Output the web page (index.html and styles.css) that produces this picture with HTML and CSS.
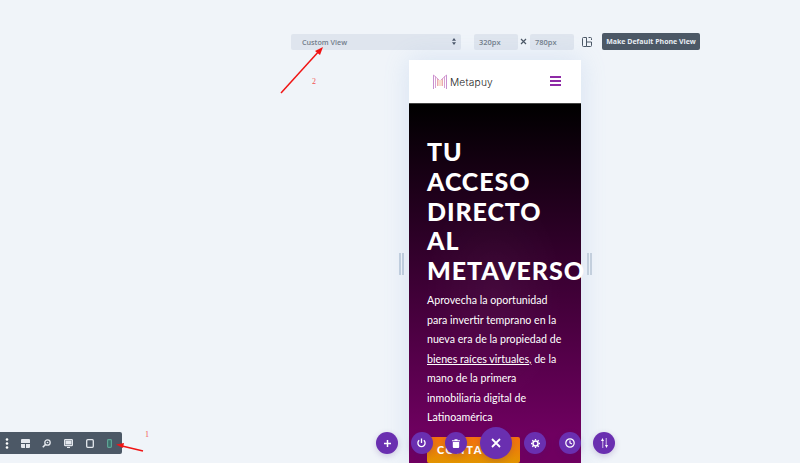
FILE: index.html
```html
<!DOCTYPE html>
<html lang="es">
<head>
<meta charset="utf-8">
<title>Metapuy</title>
<link rel="stylesheet" href="styles.css">
</head>
<body>
<div class="page">
  <div class="topbar">
    <div class="select"><span>Custom View</span>
      <svg class="updown" width="4" height="7" viewBox="0 0 4 7"><path d="M2 0 4 2.700H0zM2 7 0 4.300h4z" fill="#4a5568"/></svg>
    </div>
    <div class="dim">320px</div>
    <svg class="times" width="7" height="7" viewBox="0 0 7 7"><path d="M1 1l5 5M6 1 1 6" stroke="#4c5866" stroke-width="1.200"/></svg>
    <div class="dim">780px</div>
    <svg class="swap" width="10" height="10" viewBox="0 0 10 10" fill="none" stroke="#4c5866" stroke-width="1"><path d="M4.500 .5H1.500a1 1 0 0 0-1 1v7a1 1 0 0 0 1 1h3zM4.500 5h5v3.500a1 1 0 0 1-1 1h-4M6.500 .5h2a1 1 0 0 1 1 1v1.500"/></svg>
    <button class="make">Make Default Phone View</button>
  </div>

  <div class="stage">
    <div class="handle"></div>
    <div class="phone">
      <header class="nav">
        <div class="brand">
          <svg width="14" height="16" viewBox="0 0 14 16" fill="none" stroke-width="1">
            <path d="M.5 1v14" stroke="#c98fd0"/><path d="M2.500 2v12" stroke="#d7a0d2"/>
            <path d="M4.500 4v8" stroke="#eaa9b0"/><path d="M6 6v6" stroke="#f0b9a0"/>
            <path d="M8 6v6" stroke="#f0b9a0"/><path d="M9.500 4v8" stroke="#eaa9b0"/>
            <path d="M11.500 2v12" stroke="#d7a0d2"/><path d="M13.500 1v14" stroke="#c98fd0"/>
            <path d="M.5 1 6 6M13.500 1 8 6" stroke="#d7a0d2"/>
          </svg>
          <span class="logo-text">Metapuy</span>
        </div>
        <div class="burger"><i></i><i></i><i></i></div>
      </header>
      <section class="hero">
        <h1>TU<br>ACCESO<br>DIRECTO<br>AL<br>METAVERSO</h1>
        <p>Aprovecha la oportunidad para invertir temprano en la nueva era de la propiedad de <u>bienes raíces virtuales,</u> de la mano de la primera inmobiliaria digital de Latinoamérica</p>
        <a class="cta">CONTACTO</a>
      </section>
    </div>
    <div class="handle"></div>
  </div>

  <div class="views">
    <svg class="vi" width="4" height="11" viewBox="0 0 4 11" fill="#fff"><circle cx="2" cy="1.500" r="1.300"/><circle cx="2" cy="5.500" r="1.300"/><circle cx="2" cy="9.500" r="1.300"/></svg>
    <svg class="vi" width="9" height="9" viewBox="0 0 9 9" fill="#e4e8ee"><path d="M0 1a1 1 0 0 1 1-1h7a1 1 0 0 1 1 1v3H0z"/><path d="M0 5h4v4H1a1 1 0 0 1-1-1zM5 5h4v3a1 1 0 0 1-1 1H5z"/></svg>
    <svg class="vi" width="9" height="9" viewBox="0 0 9 9" fill="none" stroke="#e4e8ee"><circle cx="5.500" cy="3.500" r="2.700" stroke-width="1.300"/><circle cx="5.500" cy="3.500" r=".8" fill="#e4e8ee" stroke="none"/><path d="M3.500 5.500 .8 8.200" stroke-width="1.600"/></svg>
    <svg class="vi" width="9" height="9" viewBox="0 0 9 9" fill="none" stroke="#e4e8ee"><rect x=".6" y=".6" width="7.800" height="6" rx=".6" stroke-width="1.200"/><path d="M3 8.500h3" stroke-width="1.200"/><rect x="1.500" y="1.500" width="6" height="4" fill="#e4e8ee" stroke="none"/></svg>
    <svg class="vi" width="8" height="9" viewBox="0 0 8 9" fill="none" stroke="#e4e8ee" stroke-width="1.300"><rect x=".7" y=".7" width="6.600" height="7.600" rx="1"/></svg>
    <svg class="vi" width="5" height="9" viewBox="0 0 5 9" fill="#3d6f6c" stroke="#5fa596" stroke-width="1.200"><rect x=".6" y=".6" width="3.800" height="7.800" rx=".8"/></svg>
  </div>

  <div class="fabs">
    <button class="fab edge"><svg width="7" height="7" viewBox="0 0 7 7"><path d="M3.500 0v7M0 3.500h7" stroke="#fff" stroke-width="1.500"/></svg></button>
    <button class="fab"><svg width="9" height="10" viewBox="0 0 9 10" fill="none" stroke="#fff" stroke-width="1.300"><path d="M4.500 .5v4.500"/><path d="M2.200 2.200a3.600 3.600 0 1 0 4.600 0"/></svg></button>
    <button class="fab"><svg width="8" height="9" viewBox="0 0 8 9" fill="#fff"><path d="M0 1.200h2.500V.2h3v1H8v1H0zM.8 3h6.400v5a1 1 0 0 1-1 1H1.800a1 1 0 0 1-1-1z"/></svg></button>
    <button class="fab big"><svg width="10" height="10" viewBox="0 0 10 10"><path d="M1 1l8 8M9 1 1 9" stroke="#fff" stroke-width="1.800"/></svg></button>
    <button class="fab"><svg width="9" height="9" viewBox="0 0 9 9" fill="none" stroke="#fff"><circle cx="4.500" cy="4.500" r="2.500" stroke-width="1.500"/><path d="M4.500 0v1.500M4.500 7.500V9M0 4.500h1.500M7.500 4.500H9M1.300 1.300l1 1M6.700 6.700l1 1M7.700 1.300l-1 1M2.300 6.700l-1 1" stroke-width="1.300"/></svg></button>
    <button class="fab"><svg width="10" height="10" viewBox="0 0 10 10" fill="none" stroke="#fff" stroke-width="1.200"><circle cx="5" cy="5" r="4.200"/><path d="M5 2.500V5l2 1"/></svg></button>
    <button class="fab edge"><svg width="9" height="10" viewBox="0 0 9 10" fill="#fff"><path d="M2.500 10V3H1L2.500 0 4 3H3.200v7zM6.500 0v7H8L6.500 10 5 7h.8V0z"/></svg></button>
  </div>

  <svg class="marks" width="800" height="463" viewBox="0 0 800 463" fill="none">
    <path d="M281 93 320 50" stroke="#f01414" stroke-width="1.500"/><path d="M323 47 315 51 320 55z" fill="#f01414"/>
    <path d="M143 451 120 445.500" stroke="#f01414" stroke-width="1.500"/><path d="M116 444.500 124 443 123 448z" fill="#f01414"/>
    <text x="312" y="84" class="note">2</text>
    <text x="145" y="437" class="note">1</text>
  </svg>
</div>
</body>
</html>
```
FILE: styles.css
```css
* { box-sizing: border-box; }
html, body { margin: 0; height: 100%; }
body { background: #f0f4f9; font-family: "Open Sans", sans-serif; overflow: hidden; }
.page { position: relative; width: 800px; height: 463px; overflow: hidden; padding-top: 33px; }

.topbar { display: flex; align-items: center; height: 17px; margin-left: 291px; }
.select { width: 170px; height: 16px; background: #dfe5ee; border-radius: 2px; display: flex; align-items: center; justify-content: space-between; padding: 0 5px 0 11px; font-size: 7.200px; font-weight: 600; color: #727d8b; margin-right: 13px; }
.updown { display: block; }
.dim { width: 44px; height: 16px; background: #dfe5ee; border-radius: 2px; display: flex; align-items: center; padding-left: 5px; font-size: 7.500px; font-weight: 600; color: #727d8b; }
.times { margin: 0 3px 0 2px; }
.swap { margin: 0 10px 0 8px; }
.make { width: 98px; height: 17px; padding: 0; border: 0; border-radius: 2px; background: #4c5866; color: #e8edf3; font-family: "Open Sans", sans-serif; font-size: 7px; font-weight: 700; text-align: center; white-space: nowrap; }

.stage { display: flex; align-items: flex-start; margin: 10px 0 0 399px; }
.handle { width: 5px; height: 22px; margin-top: 193px; border-left: 2px solid #c3cfdd; border-right: 2px solid #c3cfdd; }
.phone { width: 172px; height: 400px; margin: 0 6px 0 5px; background: #fff; box-shadow: 0 0 24px rgba(110, 160, 220, .2); display: flex; flex-direction: column; }
.nav { height: 43px; flex: none; display: flex; align-items: center; justify-content: space-between; padding: 0 20px 0 24px; }
.brand { display: flex; align-items: center; gap: 3px; }
.brand svg { display: block; }
.logo-text { font-family: "Inter", sans-serif; font-size: 10.200px; font-weight: 300; color: #222; letter-spacing: .2px; padding-top: 1px; }
.burger { width: 11px; display: flex; flex-direction: column; gap: 2.500px; margin-top: -1px; }
.burger i { display: block; height: 1.400px; background: #8e2aa6; }

.hero { flex: 1; padding: 33px 0 0 18px; color: #fff; font-family: "Lato", sans-serif; background: radial-gradient(70px 110px at 85px 190px, rgba(255, 255, 255, .035), transparent), linear-gradient(180deg, #000 0, #6f0060 330px); border-top: 1px solid #444; }
h1 { margin: 0; font-size: 25px; line-height: 29.800px; font-weight: 900; letter-spacing: .9px; white-space: nowrap; }
p { margin: 4.500px 0 0; width: 136px; font-size: 10.650px; line-height: 19.400px; }
.cta { display: block; width: 93px; height: 26px; margin-top: 11px; border-radius: 2px; background: linear-gradient(180deg, #f46f10, #e29400); font-size: 11px; font-weight: 900; letter-spacing: 1.600px; line-height: 25px; text-align: center; }

.views { position: absolute; left: 0; top: 432px; width: 122px; height: 22px; padding-left: 5px; background: #4c5866; border-radius: 0 2px 2px 0; display: flex; align-items: center; gap: 12.800px; }
.vi { display: block; }
.vi:first-child { margin-right: -1.300px; }

.fabs { position: absolute; left: 376px; top: 427px; width: 239px; height: 32px; display: flex; align-items: center; justify-content: space-between; }
.fab { width: 22px; height: 22px; padding: 0; border: 0; border-radius: 50%; background: #6a2fb0; display: flex; align-items: center; justify-content: center; box-shadow: 0 2px 6px rgba(60, 20, 120, .2); }
.fab.big { width: 32px; height: 32px; }

.marks { position: absolute; left: 0; top: 0; pointer-events: none; }
.note { font-family: "Liberation Serif", serif; font-size: 8px; fill: #f25555; }
```
